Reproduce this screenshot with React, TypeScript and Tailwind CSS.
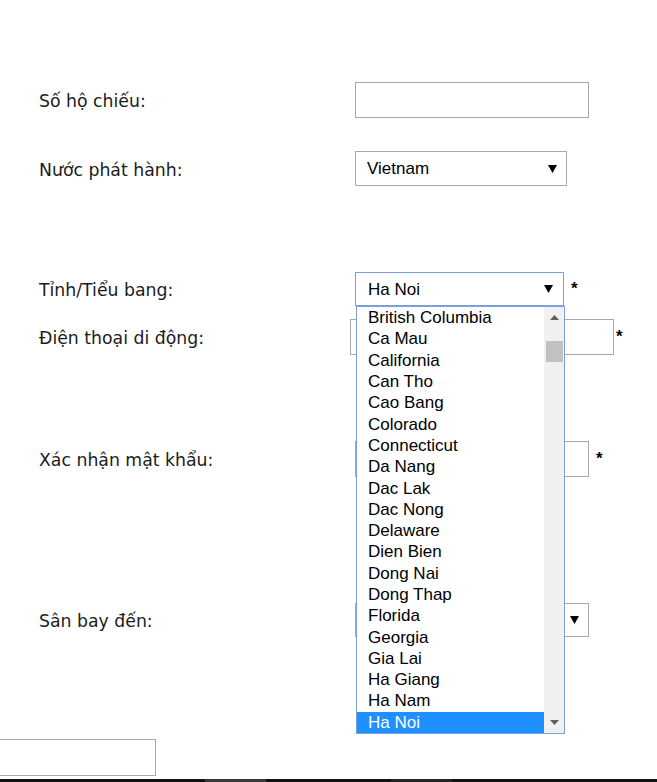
import React from "react";

const labelCls =
  "w-[355px] shrink-0 pl-[39px] pt-[4px] text-[17.3px] text-[#1c1c1c] [font-family:'DejaVu_Sans',Verdana,sans-serif]";

function Arrow({ className = "" }: { className?: string }) {
  return (
    <svg width="9" height="8" viewBox="0 0 9 8" className={className}>
      <polygon points="0,0 9,0 4.5,8" fill="#000" />
    </svg>
  );
}

const items = [
  "British Columbia",
  "Ca Mau",
  "California",
  "Can Tho",
  "Cao Bang",
  "Colorado",
  "Connecticut",
  "Da Nang",
  "Dac Lak",
  "Dac Nong",
  "Delaware",
  "Dien Bien",
  "Dong Nai",
  "Dong Thap",
  "Florida",
  "Georgia",
  "Gia Lai",
  "Ha Giang",
  "Ha Nam",
  "Ha Noi",
];

function Star() {
  return (
    <span className="text-[17px] font-bold text-black leading-none [font-family:'Liberation_Sans',Arial,sans-serif]">
      *
    </span>
  );
}

export default function App() {
  return (
    <div className="w-[657px] h-[782px] bg-white overflow-hidden flex flex-col [font-family:'Liberation_Sans',Arial,sans-serif]">
      {/* Row 1 */}
      <div className="flex items-center h-[36px] mt-[82px]">
        <div className={labelCls}>Số hộ chiếu:</div>
        <div className="w-[234px] h-[36px] border border-[#a9a9a9] bg-white" />
      </div>

      {/* Row 2 */}
      <div className="flex items-center h-[35px] mt-[33px]">
        <div className={labelCls}>Nước phát hành:</div>
        <div className="w-[212px] h-[35px] border border-[#a9a9a9] bg-white flex items-center justify-between pl-[11px] pr-[9px] text-[17px] text-black">
          <span className="mt-[1px]">Vietnam</span>
          <Arrow />
        </div>
      </div>

      {/* Row 3 */}
      <div className="flex items-center h-[34px] mt-[86px] relative z-10">
        <div className={labelCls}>Tỉnh/Tiểu bang:</div>
        <div className="relative">
          <div className="w-[209px] h-[34px] border border-[#7aa0dc] bg-white flex items-center justify-between pl-[12px] pr-[10px] text-[17px] text-black">
            <span className="mt-[2px]">Ha Noi</span>
            <Arrow />
          </div>
          <div className="absolute top-full left-[1px] w-[209px] h-[428px] border border-[#7aa0dc] bg-white flex">
            <div className="flex-1 flex flex-col">
              {items.map((it) => (
                <div
                  key={it}
                  className={
                    "h-[21.3px] flex items-center pl-[11px] text-[17px] leading-none " +
                    (it === "Ha Noi" ? "bg-[#1e90ff] text-white" : "text-black")
                  }
                >
                  {it}
                </div>
              ))}
            </div>
            <div className="w-[20px] bg-[#f0f0f0] flex flex-col items-center">
              <svg width="9" height="5" viewBox="0 0 9 5" className="mt-[8px]">
                <polygon points="0,5 9,5 4.5,0" fill="#606060" />
              </svg>
              <div className="mt-[21px] w-[17px] h-[21px] bg-[#c1c1c1]" />
              <div className="flex-1" />
              <svg width="9" height="5" viewBox="0 0 9 5" className="mb-[8px]">
                <polygon points="0,0 9,0 4.5,5" fill="#606060" />
              </svg>
            </div>
          </div>
        </div>
        <div className="ml-[7px] mt-[-1px]">
          <Star />
        </div>
      </div>

      {/* Row 4 */}
      <div className="flex items-center h-[36px] mt-[13px]">
        <div className={labelCls}>Điện thoại di động:</div>
        <div className="-ml-[5px] w-[264px] h-[36px] border border-[#a9a9a9] bg-white" />
        <div className="ml-[2px] mt-[-1px]">
          <Star />
        </div>
      </div>

      {/* Row 5 */}
      <div className="flex items-center h-[36px] mt-[86px]">
        <div className={labelCls}>Xác nhận mật khẩu:</div>
        <div className="w-[234px] h-[36px] border border-[#a9a9a9] bg-white" />
        <div className="ml-[7px] mt-[-1px]">
          <Star />
        </div>
      </div>

      {/* Row 6 */}
      <div className="flex items-center h-[34px] mt-[126px]">
        <div className={labelCls}>Sân bay đến:</div>
        <div className="w-[234px] h-[34px] border border-[#a9a9a9] bg-white flex items-center justify-end pr-[9px]">
          <Arrow />
        </div>
      </div>

      {/* Row 7 */}
      <div className="flex items-center h-[37px] mt-[102px]">
        <div className="-ml-[2px] w-[158px] h-[37px] border border-[#a9a9a9] bg-white" />
      </div>

      {/* Bottom bar */}
      <div className="mt-[3px] h-[3px] w-full bg-[#111] flex">
        <div className="w-[205px]" />
        <div className="w-[61px] bg-[#3a3a3a]" />
        <div className="w-[125px]" />
        <div className="w-[61px] bg-[#232323]" />
      </div>
    </div>
  );
}
